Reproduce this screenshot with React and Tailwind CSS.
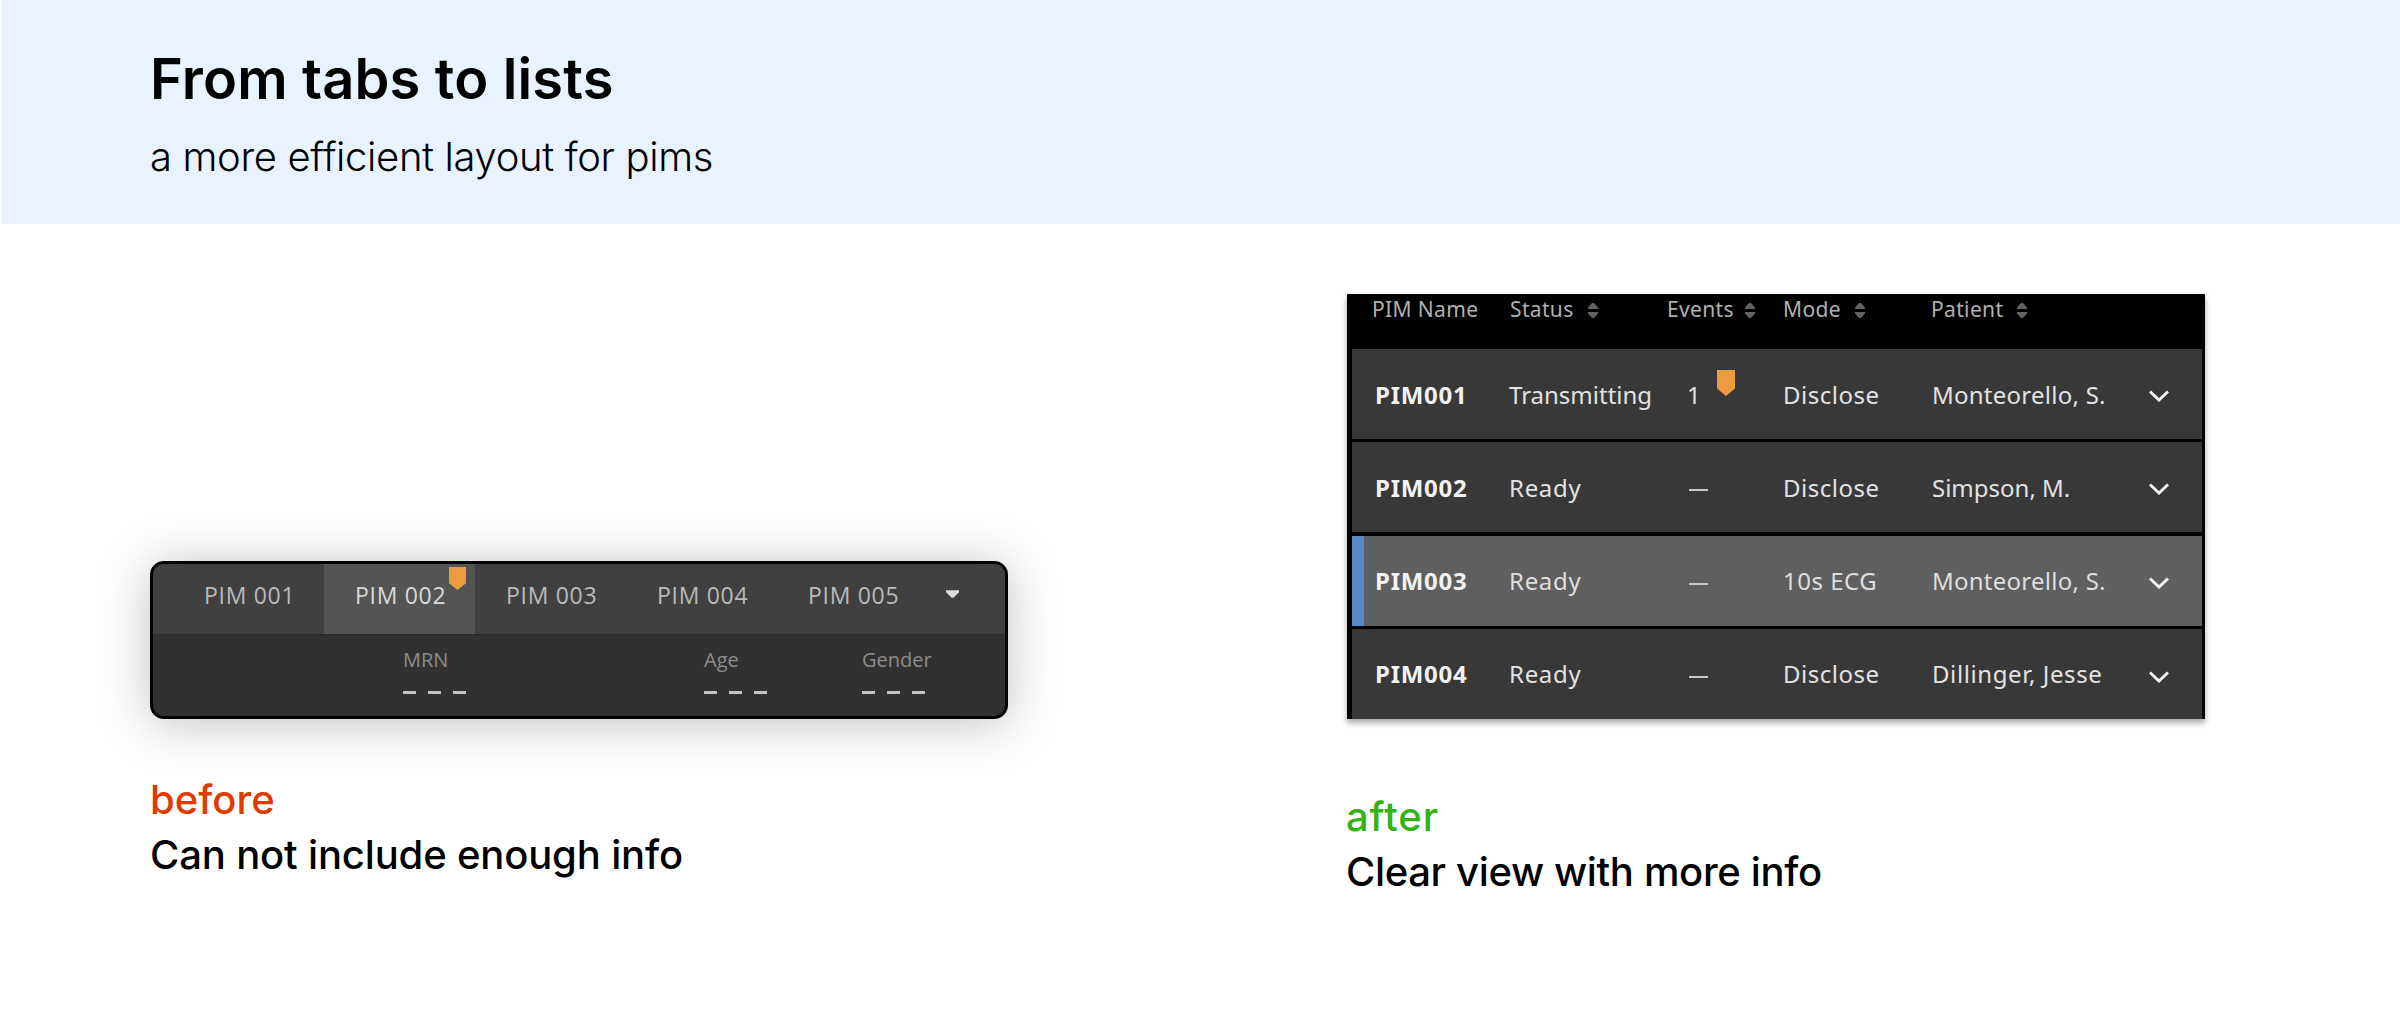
import React from 'react';

const tabs = ['PIM 001', 'PIM 002', 'PIM 003', 'PIM 004', 'PIM 005'];

const rows = [
  { name: 'PIM001', status: 'Transmitting', events: 1, mode: 'Disclose', patient: 'Monteorello, S.' },
  { name: 'PIM002', status: 'Ready', events: 0, mode: 'Disclose', patient: 'Simpson, M.' },
  { name: 'PIM003', status: 'Ready', events: 0, mode: '10s ECG', patient: 'Monteorello, S.', selected: true },
  { name: 'PIM004', status: 'Ready', events: 0, mode: 'Disclose', patient: 'Dillinger, Jesse' },
];

const tracking = {
  Transmitting: 'tracking-normal',
  'Simpson, M.': 'tracking-normal',
  'Monteorello, S.': 'tracking-[0.25px]',
};

function Flag({ className }) {
  return (
    <svg className={className} viewBox="0 0 18 26" preserveAspectRatio="none" fill="#e99c40">
      <path d="M0 0H18V18.5L9 26L0 18.5Z" />
    </svg>
  );
}

function SortIcon() {
  return (
    <svg className="w-[10px] h-[15px] mt-[8px] shrink-0" viewBox="0 0 10 15" fill="#626262">
      <path d="M4 0H6L10 4.5V6H0V4.5Z" />
      <path d="M0 9H10V10.5L6 15H4L0 10.5Z" />
    </svg>
  );
}

function Chevron({ className }) {
  return (
    <svg className={className} viewBox="0 0 20 12" fill="none" stroke="#f5f5f5" strokeWidth="3">
      <path d="M1 1.5L10 10L19 1.5" />
    </svg>
  );
}

function HeaderCell({ children, sortable, gap = 'gap-[14px]' }) {
  return (
    <div className={`flex ${gap}`}>
      <span>{children}</span>
      {sortable && <SortIcon />}
    </div>
  );
}

function Field({ label }) {
  return (
    <div>
      <p className="text-[20px] leading-[28px] text-[#8c8c8c]">{label}</p>
      <div className="flex gap-[12px] mt-[17px]">
        <span className="w-[13px] h-[3px] bg-[#c4c4c4]"></span>
        <span className="w-[13px] h-[3px] bg-[#c4c4c4]"></span>
        <span className="w-[13px] h-[3px] bg-[#c4c4c4]"></span>
      </div>
    </div>
  );
}

function TabsPanel() {
  return (
    <div className="w-[858px] h-[158px] rounded-[14px] border-3 border-black bg-[#313131] overflow-hidden shadow-[0_4px_50px_rgba(0,0,0,0.25)] font-['Open_Sans',sans-serif]">
      <div className="flex h-[71px] bg-[#404040] border-b border-[#2b2b2b] pl-[20px]">
        {tabs.map((tab, i) => (
          <div
            key={tab}
            className={`relative w-[151px] pt-[16px] pl-[31px] text-[23px] leading-[30px] font-medium tracking-[0.7px] ${
              i === 1 ? 'bg-[#545454] text-[#dadada]' : 'text-[#bababa]'
            }`}
          >
            {tab}
            {i === 1 && <Flag className="absolute top-[3px] right-[9px] w-[17px] h-[23px]" />}
          </div>
        ))}
        <svg className="w-[13px] h-[8px] mt-[26px] ml-[18px]" viewBox="0 0 14 8" fill="#dcdcdc">
          <path d="M0 0H14V2L8 8H6L0 2Z" />
        </svg>
      </div>
      <div className="grid grid-cols-[301px_158px_1fr] pt-[11px] pl-[250px]">
        <Field label="MRN" />
        <Field label="Age" />
        <Field label="Gender" />
      </div>
    </div>
  );
}

function ListRow({ row, last }) {
  return (
    <div
      className={`relative grid grid-cols-[134px_178px_96px_149px_217px_1fr] items-center h-[90px] pl-[23px] ${
        row.selected ? 'bg-[#5f5f5f] text-[#dedede]' : 'bg-[#383838] text-[#e2e2e2]'
      }`}
    >
      {row.selected && <div className="absolute inset-y-0 left-0 w-[12px] bg-[#568ac6]"></div>}
      <span className="font-bold tracking-[0.75px] text-[#f2f2f2]">{row.name}</span>
      <span className={tracking[row.status] || 'tracking-[0.7px]'}>{row.status}</span>
      {row.events > 0 ? (
        <span className="relative">
          {row.events}
          <Flag className="absolute -top-[8px] left-[30px] w-[18px] h-[26px]" />
        </span>
      ) : (
        <span className="w-[19px] h-[2px] ml-[2px] mt-[6px] bg-[#c8c8c8]"></span>
      )}
      <span className="tracking-[0.5px]">{row.mode}</span>
      <span className={tracking[row.patient] || 'tracking-[0.6px]'}>{row.patient}</span>
      <Chevron className={last ? 'w-[20px] h-[12px] mt-[7px]' : 'w-[20px] h-[12px] mt-[4px]'} />
    </div>
  );
}

function ListPanel() {
  return (
    <div className="w-[858px] h-[425px] bg-black pl-[5px] pr-[3px] shadow-[0_4px_6px_rgba(0,0,0,0.35)] font-['Noto_Sans',sans-serif]">
      <div className="grid grid-cols-[138px_157px_116px_148px_1fr] h-[55px] pt-px pl-[20px] text-[21px] leading-[28px] tracking-[0.35px] text-[#b0b0b0]">
        <HeaderCell>PIM Name</HeaderCell>
        <HeaderCell sortable>Status</HeaderCell>
        <HeaderCell sortable gap="gap-[11px]">Events</HeaderCell>
        <HeaderCell sortable>Mode</HeaderCell>
        <HeaderCell sortable>Patient</HeaderCell>
      </div>
      <div className="flex flex-col gap-[3.3px] text-[24px] leading-[33px]">
        {rows.map((row, i) => (
          <ListRow key={row.name} row={row} last={i === rows.length - 1} />
        ))}
      </div>
    </div>
  );
}

export default function App() {
  return (
    <div className="w-[2400px] h-[1024px] bg-white text-black font-['Inter',sans-serif] overflow-hidden">
      {/* Page header */}
      <header className="h-[224px] ml-[2px] bg-[#e8f3ff] pt-[45px] pl-[148px]">
        <h1 className="text-[56px] leading-[68px] font-semibold tracking-[0.15px]">From tabs to lists</h1>
        <p className="mt-[20px] text-[40px] leading-[48px] font-light tracking-[-0.35px]">
          a more efficient layout for pims
        </p>
      </header>

      <main className="flex pl-[150px]">
        {/* Before */}
        <section className="w-[1197px] pt-[337px]">
          <TabsPanel />
          <div className="mt-[53px] text-[40px] leading-[55px] font-medium">
            <p className="text-[#e03a00]">before</p>
            <p className="tracking-[-0.16px]">Can not include enough info</p>
          </div>
        </section>

        {/* After */}
        <section className="pt-[70px]">
          <ListPanel />
          <div className="mt-[70px] -ml-px text-[40px] leading-[55px] font-medium">
            <p className="text-[#33b316] tracking-[0.9px]">after</p>
            <p className="tracking-[-0.35px]">Clear view with more info</p>
          </div>
        </section>
      </main>
    </div>
  );
}
